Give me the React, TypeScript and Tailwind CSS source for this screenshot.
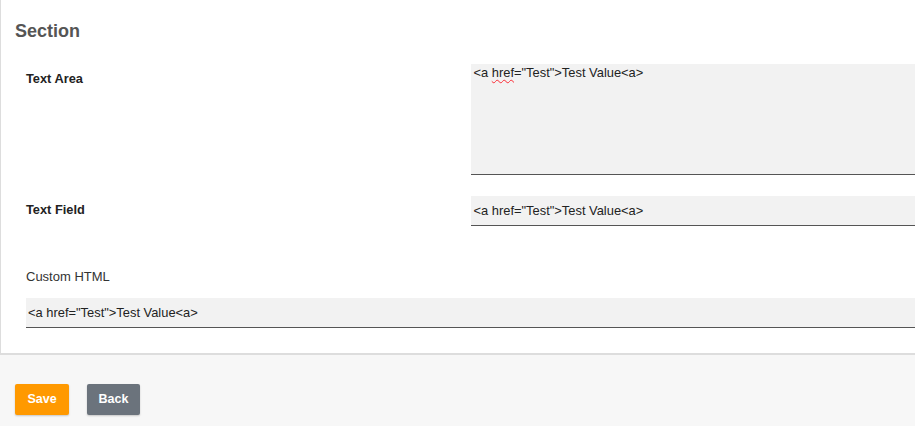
import React from "react";

const VALUE = '<a href="Test">Test Value<a>';

const App: React.FC = () => {
  return (
    <div className="min-h-[426px] bg-[#f7f7f7] font-['Liberation_Sans',Arial,sans-serif] text-[#222]">

      {/* Card */}

      <div className="bg-white border-l border-[#dddddd] border-b-2 pl-[14px] pt-[19px] pb-[25px]">

        <h2 className="text-[18px] leading-6 font-bold text-[#555555]">
          Section
        </h2>

        <div className="pl-[11px] mt-[21px]">

          {/* Text Area */}

          <div className="grid grid-cols-2">
            <div className="pt-[7px] text-[12.8px] leading-4 font-bold">
              Text Area
            </div>
            <div className="h-[111px] bg-[#f2f2f2] border-b border-[#555555] px-[3px] pt-[1px] text-[12.9px] leading-4">
              {"<a "}
              <span className="underline decoration-wavy decoration-red-500 decoration-1 underline-offset-2">
                href
              </span>
              {'="Test">Test Value<a>'}
            </div>
          </div>

          {/* Text Field */}

          <div className="grid grid-cols-2 mt-[21px]">
            <div className="pt-[6px] text-[12.8px] leading-4 font-bold">
              Text Field
            </div>
            <div className="h-[30px] flex items-center bg-[#f2f2f2] border-b border-[#555555] px-[3px] text-[12.9px] leading-4">
              {VALUE}
            </div>
          </div>

          {/* Custom HTML */}

          <div className="mt-[43px] text-[13px] leading-4 text-[#333333]">
            Custom HTML
          </div>
          <div className="mt-[13px] h-[30px] flex items-center bg-[#f2f2f2] border-b border-[#555555] px-[2px] text-[12.9px] leading-4">
            {VALUE}
          </div>

        </div>
      </div>

      {/* Actions */}

      <div className="flex gap-[18px] pl-[15px] pt-[29px]">
        <button className="w-[54px] h-[31px] rounded-[2px] bg-[#ff9900] text-white text-[12.5px] font-bold shadow-[0_1px_2px_rgba(0,0,0,0.2)]">
          Save
        </button>
        <button className="w-[53px] h-[31px] rounded-[2px] bg-[#6b737c] text-white text-[12.5px] font-bold shadow-[0_1px_2px_rgba(0,0,0,0.2)]">
          Back
        </button>
      </div>

    </div>
  );
};

export default App;
